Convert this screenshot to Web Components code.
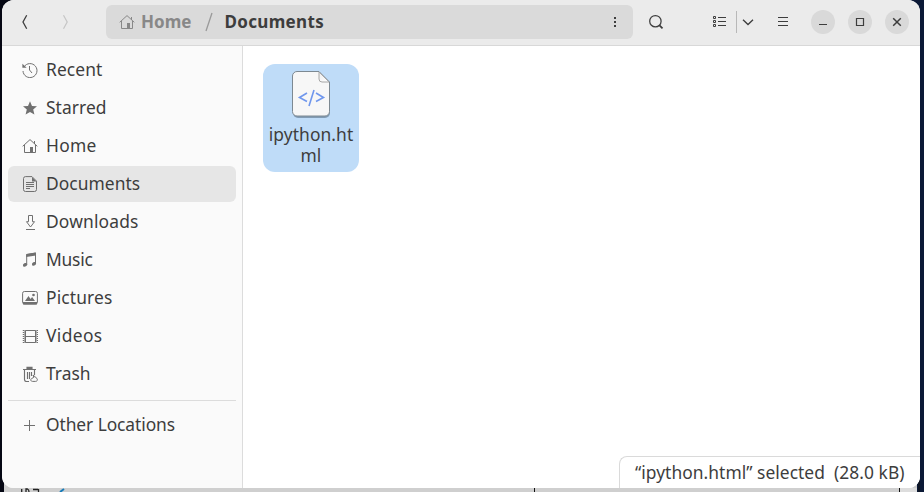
<!DOCTYPE html>
<html lang="en"><head><meta charset="utf-8"><title>Files</title>
<style>html,body{margin:0;width:924px;height:492px;overflow:hidden;background:#050713}body{font-family:"Noto Sans","Open Sans",sans-serif;color:#3d3d3d}</style></head>
<body><files-app></files-app>
<script>
const icons={
back:'<path d="M9.7 1.2 6 8l3.7 6.8" stroke-width="1.3"/>',
next:'<path d="M6.5 1.2 10.2 8l-3.7 6.8" stroke-width="1.2"/>',
home:'<path d="M.7 8.3 8 1.6l7.3 6.7M2.5 7v7.5h11V7M12.5 3v3"/><path d="M8 9h3v5.5H8z" fill="currentColor" stroke="none"/>',
recent:'<path d="M2.1 4.8A7 7 0 1 1 1 9M7.5 4v4l2.5 3"/><path d="M.4 1.7v4.1h4.3z" fill="currentColor" stroke="none"/>',
star:'<path d="m8 1.3 2 4.6 5 .4-3.8 3.3 1.2 4.9L8 11.9l-4.4 2.6 1.2-4.9L1 6.3l5-.4z" fill="currentColor" stroke="none"/>',
doc:'<path d="M3.5.6H10l4.5 4.5v8.4a2 2 0 0 1-2 2h-9a2 2 0 0 1-2-2v-11a2 2 0 0 1 2-1.9zM4 6.5h8M4 8.5h8M4 10.5h8M4 12.5h4"/><path d="M10 1v4.5h4.5z" fill="currentColor" stroke="none"/>',
down:'<path d="M6.5 1.5h4v6.2h2L8.5 13l-4-5.3h2zM4 15.5h9"/>',
music:'<path d="M4.7 13V2.4L13.5 1v11"/><path d="M4.2 2.2 14 .6v3L4.2 5zM2.9 11.1c1.8-.6 2.7.7 2.1 2.2-.7 1.5-3.4 2-3.9.6-.4-1 .3-2.3 1.8-2.8zM11.9 10.1c1.8-.6 2.6.7 2 2.2-.6 1.5-3.3 2-3.8.6-.4-1 .3-2.3 1.8-2.8z" fill="currentColor" stroke="none"/>',
pic:'<rect x=".6" y="1.5" width="14.8" height="12.5" rx="1.8"/><path d="M1 12h14v2.5H1zM3 11l3.5-5 2 3 1.6-2 2.9 4z" fill="currentColor" stroke="none"/><circle cx="11.5" cy="5" r="1.3" fill="currentColor" stroke="none"/>',
video:'<path d="M3.5 2.5h10v12h-10zM3.5 8.5h10"/><path d="M1.5 2v13M15.5 2v13" stroke-width="1.5" stroke-dasharray="1 1"/><path d="M3 2v13M14 2v13" stroke-width="1"/>',
trash:'<path d="M1 3.5h13M5 3V1.2h5V3M2.5 4v9.5a2 2 0 0 0 2 2H7M12.5 4v5M5.5 6v7M7.5 6v7M9.5 6v4" stroke-width="1.15"/><path d="M5 1h5v3H5z" fill="currentColor" stroke="none"/><path d="m11 9 2 1.7 1.9 1.7c1.2 1.8 0 3-1.4 3h-3c-1.8 0-2.3-1.8-1-2.8l2.3-1.2z"/>',
plus:'<path d="M2 8.5h11M7.5 3v11"/>',
search:'<circle cx="7.4" cy="7.2" r="5.7" stroke-width="1.25"/><path d="m11.5 11.3 3 3" stroke-width="1.7"/>',
list:'<path d="M1.500 2.500h2v2h-2zM1.500 6.500h2v2h-2zM1.500 10.500h2v2h-2z" stroke-width="1"/><path d="M6 3.500h8M6 7.500h8M6 11.500h8" stroke-width="1"/>',
chev:'<path d="m3 5.7 5 4.8 5-4.8" stroke-width="1.3"/>',
menu:'<path d="M3 3.5h10M3 7.5h10M3 11.5h10" stroke-width="1.1"/>',
dots:'<path d="M7 3h2v2H7zM7 7h2v2H7zM7 11h2v2H7z" fill="currentColor" stroke="none"/>',
min:'<path d="M4 10.5h8" stroke-width="1.2"/>',
max:'<path d="M4.5 4.5h7v7h-7z" stroke-width="1.2"/>',
close:'<path d="m4.2 4.2 7.6 7.6M11.8 4.2l-7.6 7.6" stroke-width="1.5"/>'};
class UiIcon extends HTMLElement{connectedCallback(){this.attachShadow({mode:'open'}).innerHTML=`<style>:host{display:block;width:16px;height:16px;flex:none}svg{display:block}</style><svg width="16" height="16" viewBox="0 0 16 16" fill="none" stroke="currentColor">${icons[this.getAttribute('name')]}</svg>`}}
customElements.define('ui-icon',UiIcon);
// A label whose tracking fits its longest line to a given width.
class UiLabel extends HTMLElement{connectedCallback(){const w=+this.getAttribute('width');this.attachShadow({mode:'open'}).innerHTML=`<style>:host{display:block;white-space:pre;flex:none;width:${w}px}span{display:inline-block}</style><span></span>`;const s=this.shadowRoot.querySelector('span');s.textContent=this.getAttribute('text');const n=Math.max(...s.textContent.split('\n').map(l=>l.length));s.style.letterSpacing=(w-s.getBoundingClientRect().width)/n+'px'}}
customElements.define('ui-label',UiLabel);
class WindowButton extends HTMLElement{connectedCallback(){this.attachShadow({mode:'open'}).innerHTML=`<style>:host{display:grid;place-items:center;width:24px;height:24px;border-radius:50%;background:#d9d9d9;flex:none}</style><ui-icon name="${this.getAttribute('icon')}"></ui-icon>`}}
customElements.define('window-button',WindowButton);
class PathBar extends HTMLElement{connectedCallback(){this.attachShadow({mode:'open'}).innerHTML=`<style>:host{display:flex;box-sizing:border-box;align-items:center;flex:none;width:527px;height:34px;padding:0 10px 0 13px;border-radius:6px;background:#dadada;font-size:17px;font-weight:700;line-height:24px}.m{color:#888}.h{margin-left:6px}ui-label{margin-top:-1px}svg{margin:0 12px 0 13px}.e{margin-left:auto}</style><ui-icon class="m" name="home"></ui-icon><ui-label class="m h" text="Home" width="50.5"></ui-label><svg width="8" height="20"><path d="M7 1 1 19" stroke="#999" stroke-width="1.3"/></svg><ui-label text="Documents" width="99.5"></ui-label><ui-icon class="e" name="dots"></ui-icon>`}}
customElements.define('path-bar',PathBar);
class HeaderBar extends HTMLElement{connectedCallback(){this.attachShadow({mode:'open'}).innerHTML=`<style>:host{display:flex;box-sizing:border-box;height:46px;align-items:center;background:#ebebeb;border-bottom:1px solid #d8d8d8;padding:0 11px 1px 15px}.next{color:#c5c5c5;margin-left:24px}path-bar{margin-left:33px}.s{margin-left:15px}.l{margin-left:48px}i{width:1px;height:22px;background:#b8b8b8;margin:0 3px 0 8px}.menu{margin-left:19px}.buttons{display:flex;gap:13px;margin-left:auto}</style><ui-icon name="back"></ui-icon><ui-icon class="next" name="next"></ui-icon><path-bar></path-bar><ui-icon class="s" name="search"></ui-icon><ui-icon class="l" name="list"></ui-icon><i></i><ui-icon name="chev"></ui-icon><ui-icon class="menu" name="menu"></ui-icon><div class="buttons"><window-button icon="min"></window-button><window-button icon="max"></window-button><window-button icon="close"></window-button></div>`}}
customElements.define('header-bar',HeaderBar);
class SideItem extends HTMLElement{connectedCallback(){this.attachShadow({mode:'open'}).innerHTML=`<style>:host{display:flex;box-sizing:border-box;height:36px;align-items:center;gap:8px;padding:0 14px;border-radius:6px;font-size:17.4px;line-height:24px}:host([selected]){background:#e6e6e6}ui-icon{color:#707070;margin-top:-1px}ui-label{margin-top:-2px}</style><ui-icon name="${this.getAttribute('icon')}"></ui-icon><ui-label text="${this.getAttribute('text')}" width="${this.getAttribute('width')}"></ui-label>`}}
customElements.define('side-item',SideItem);
class SideBar extends HTMLElement{connectedCallback(){const a=[['recent','Recent',56.5],['star','Starred',60.5],['home','Home',50.5],['doc','Documents',94.2],['down','Downloads',92.5],['music','Music',46.5],['pic','Pictures',66.5],['video','Videos',56.5],['trash','Trash',44.5]];this.attachShadow({mode:'open'}).innerHTML=`<style>:host{display:flex;box-sizing:border-box;width:241px;height:442px;flex-direction:column;gap:2px;padding:6px 6px 0;background:#fafafa;border-right:1px solid #dcdcdc}hr{border:0;height:1px;width:100%;background:#dcdcdc;margin:6px 0 4px}</style>${a.map(([i,t,w])=>`<side-item icon="${i}" text="${t}" width="${w}" ${t==='Documents'?'selected':''}></side-item>`).join('')}<hr><side-item icon="plus" text="Other Locations" width="129"></side-item>`}}
customElements.define('side-bar',SideBar);
class FileTile extends HTMLElement{connectedCallback(){this.attachShadow({mode:'open'}).innerHTML=`<style>:host{display:flex;box-sizing:border-box;width:96px;height:108px;flex-direction:column;align-items:center;background:#bfdcf8;border-radius:12px;padding-top:5px;font-size:17.4px;line-height:21px}svg{margin:0 0 4px 1px;flex:none}ui-label{text-align:center}</style><svg width="42" height="51" viewBox="0 0 42 51" fill="none"><defs><linearGradient id="f" x2="1" y2="1"><stop stop-color="#eee"/><stop offset="1" stop-color="#fff"/></linearGradient></defs><path d="M6 3h21l12 11v30a5 5 0 0 1-5 5H7a5 5 0 0 1-5-5V7q0-4 4-4" fill="#819bb4"/><path d="M6 2.500h22L38.500 13v29.500A4.500 4.500 0 0 1 34 47H6a4.500 4.500 0 0 1-4.500-4.500V7A4.500 4.500 0 0 1 6 2.500z" fill="#f7f7f7" stroke="#7d8992"/><path d="M28 3v7a3 3 0 0 0 3 3h7z" fill="url(#f)" stroke="#a6a6a6"/><path d="m16 24-7.500 4.500L16 32.500M25 24l7.500 4.500-7.500 4M23 21l-5 16" stroke="#7097ed" stroke-width="1.6"/></svg><ui-label text="ipython.ht&#10;ml" width="84.5"></ui-label>`}}
customElements.define('file-tile',FileTile);
class FileView extends HTMLElement{connectedCallback(){this.attachShadow({mode:'open'}).innerHTML=`<style>:host{display:flex;box-sizing:border-box;flex:1;height:442px;padding:18px 0 0 20px;background:#fff;position:relative}.status{position:absolute;right:-1px;bottom:0;box-sizing:border-box;width:302px;height:32px;border:solid #dadada;border-width:1px 0 0 1px;border-top-left-radius:8px;padding:3px 0 0 15px;background:#fff;font-size:17.4px;line-height:24px}</style><file-tile></file-tile><div class="status"><ui-label text="“ipython.html” selected  (28.0 kB)" width="269.5"></ui-label></div>`}}
customElements.define('file-view',FileView);
class FilesApp extends HTMLElement{connectedCallback(){this.attachShadow({mode:'open'}).innerHTML=`<style>:host{display:block;position:relative;width:924px;height:492px;background:linear-gradient(90deg,#050713 50%,#0b1936 50%)}.under{position:absolute;left:4px;top:470px}.window{position:relative;width:918px;height:488px;margin-left:2px;border-radius:12px;overflow:hidden;background:#fff}.body{display:flex}</style><svg class="under" width="920" height="22"><path fill="#cfcfcf" d="M0 0h913v22H0z"/><path fill="#ddd" d="M895 18h18v4h-18z"/><path stroke="#111" d="M530.500 18v4M895.500 18v4M915 0v22"/><path d="M17.700 22v-3M22 22v-3h1.500q1.500.500 1.500 3M29 19.500h5M34.500 19v3" fill="none" stroke="#222" stroke-width="1.300"/><path d="m56 22 4-3" stroke="#177bb9" stroke-width="2"/></svg><div class="window"><header-bar></header-bar><div class="body"><side-bar></side-bar><file-view></file-view></div></div>`}}
customElements.define('files-app',FilesApp);
</script></body></html>
